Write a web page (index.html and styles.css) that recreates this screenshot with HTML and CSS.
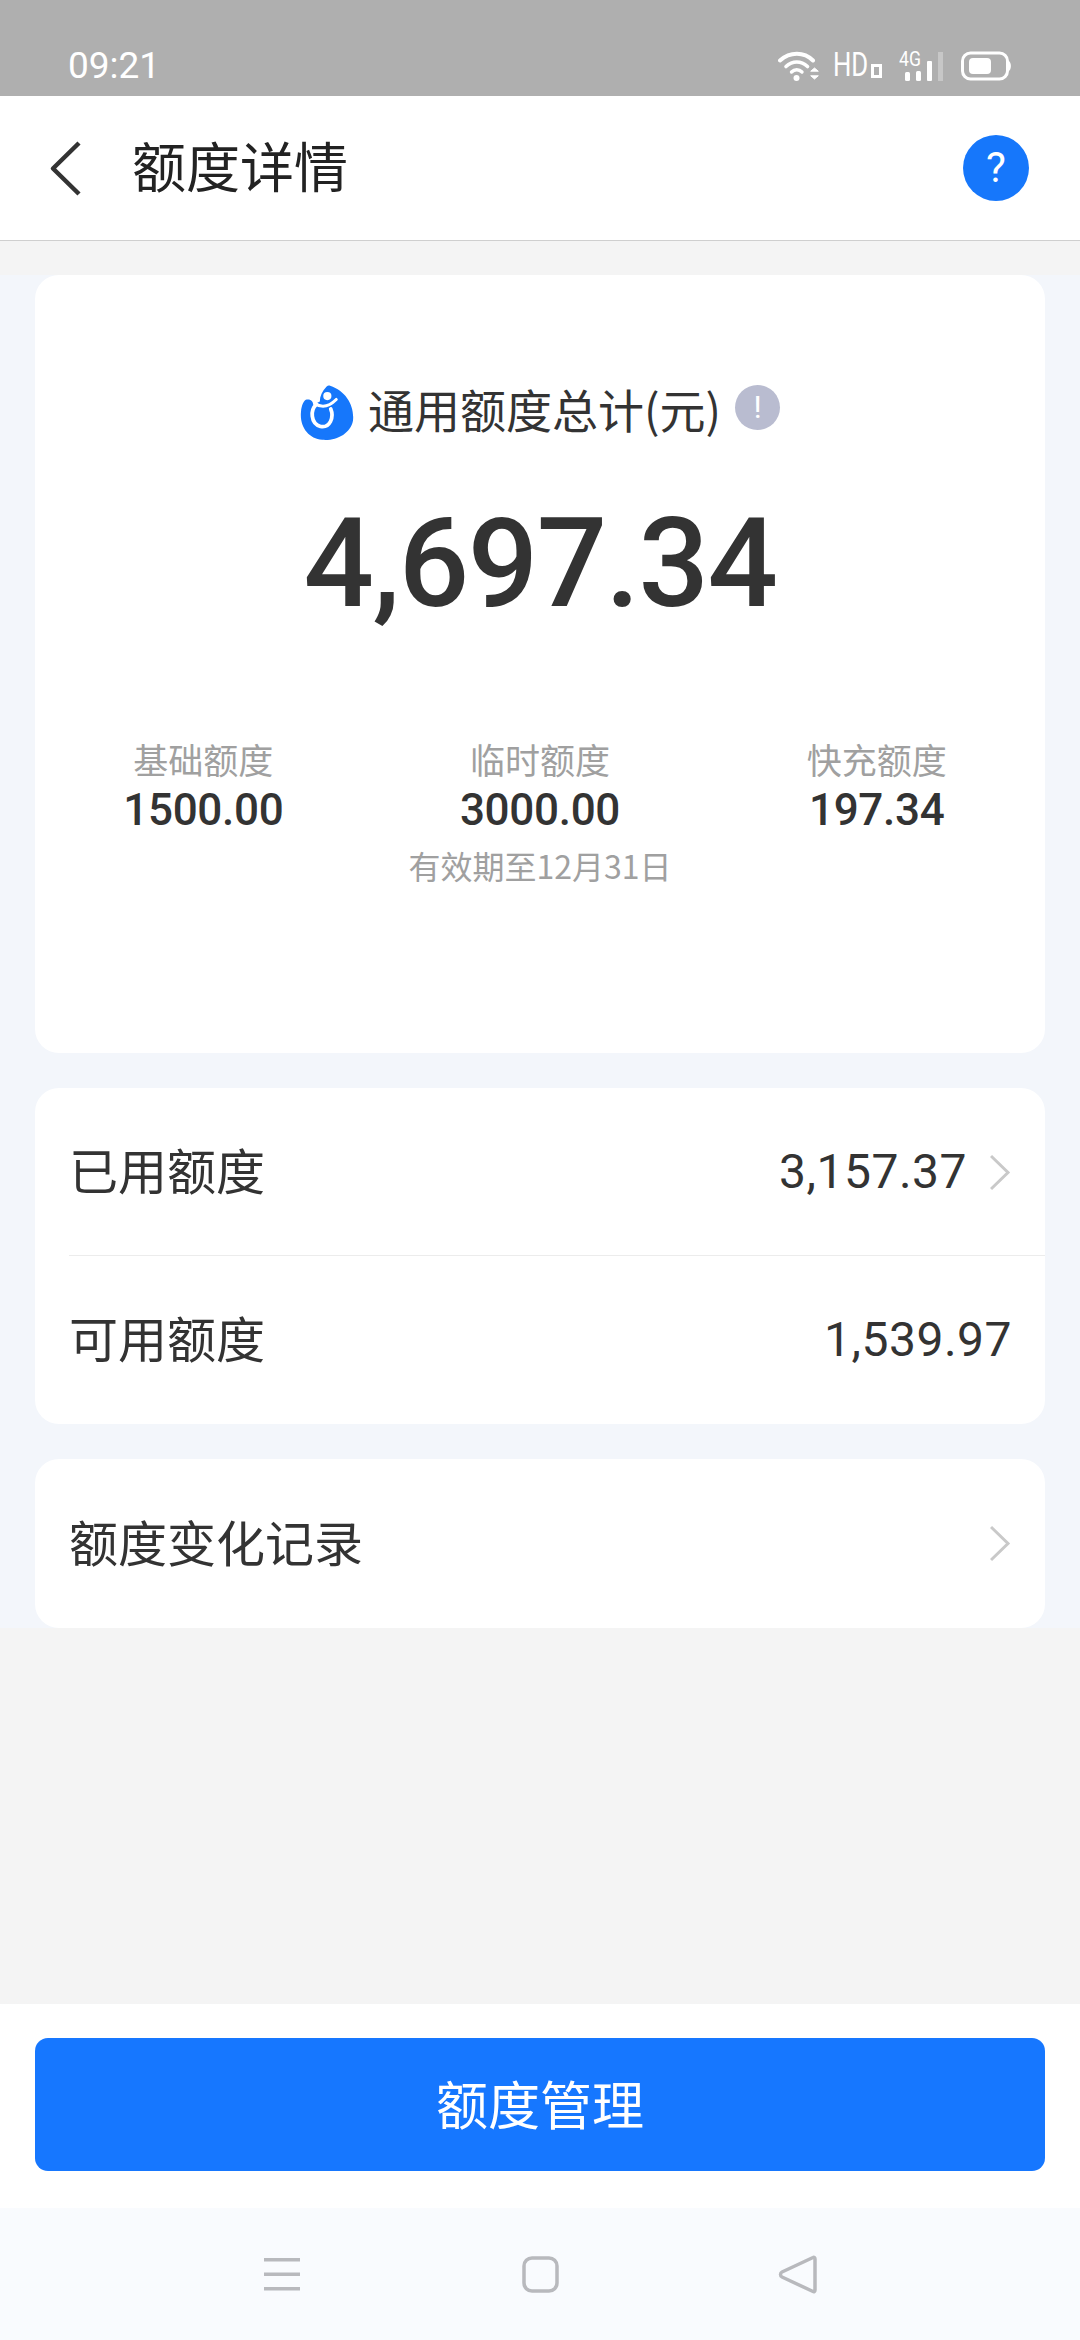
FILE: index.html
```html
<!DOCTYPE html>
<html lang="zh-CN">
<head>
<meta charset="utf-8">
<title>额度详情</title>
<link rel="stylesheet" href="styles.css">
</head>
<body>
<div class="app">
  <div class="status">
    <span class="time">09:21</span>
    <div class="status-icons">
      <svg class="ic-wifi" width="41" height="31" viewBox="0 0 41 31" fill="none" stroke="#fff" stroke-linecap="round">
        <path d="M2 9.500C12 0.500 26 0.500 35 9.500" stroke-width="4"/>
        <path d="M8 15.500C14.500 9.500 23 9.500 29.500 15.500" stroke-width="3.600"/>
        <path d="M13.500 21C16.500 18 21 18 24 21" stroke-width="3.400"/>
        <circle cx="18.500" cy="27" r="3" fill="#fff" stroke="none"/>
        <path d="M33 20l3.500-3 3.500 3zM33 25l3.500 3 3.500-3z" fill="#fff" stroke="#fff" stroke-width="1"/>
      </svg>
      <div class="hd">
        <span class="hd-text">HD</span>
        <span class="hd-box"></span>
      </div>
      <div class="signal">
        <span class="g-text">4G</span>
        <svg width="45" height="31" viewBox="0 0 45 31">
          <rect x="6" y="21" width="5" height="9" rx="1.500" fill="#fff"/>
          <rect x="17" y="20" width="5" height="10" rx="1.500" fill="#fff"/>
          <rect x="28" y="10" width="5" height="20" rx="1" fill="#fff"/>
          <rect x="39" y="1" width="5" height="29" fill="#fff" fill-opacity=".3"/>
        </svg>
      </div>
      <svg class="ic-batt" width="51" height="30" viewBox="0 0 51 30">
        <rect x="1.500" y="2" width="45" height="26" rx="8" fill="none" stroke="#fff" stroke-width="3"/>
        <rect x="8" y="7" width="22" height="16" rx="4" fill="#fff"/>
        <path d="M48 10c2.500 2 2.500 8 0 10z" fill="#fff"/>
      </svg>
    </div>
  </div>

  <header class="topbar">
    <svg class="back" width="32" height="55" viewBox="0 0 32 55" fill="none" stroke="#333" stroke-width="4.500" stroke-linejoin="round">
      <path d="M30 2L4 27.500 30 53" />
    </svg>
    <h1 class="title">额度详情</h1>
    <span class="help">?</span>
  </header>

  <main class="main">
    <div class="stack">
      <section class="card summary">
        <div class="sum-head">
          <svg class="logo" width="54" height="56" viewBox="30 28 158 163">
            <path d="M118 30C165 45 190 90 185 132C178 170 135 192 95 188C55 185 28 150 33 105C34 88 42 70 50 70C60 68 70 76 68 86L88 76C88 60 95 45 108 32C112 28 116 29 118 30Z" fill="#1677fb"/>
            <path d="M78 84C60 100 60 140 90 149C118 154 130 122 120 98" fill="none" stroke="#fff" stroke-width="11" stroke-linecap="round"/>
            <path d="M74 82C92 94 114 92 136 70" fill="none" stroke="#fff" stroke-width="9" stroke-linecap="round"/>
            <circle cx="110" cy="60" r="12" fill="#fff"/>
          </svg>
          <span class="sum-title">通用额度总计(元)</span>
          <span class="warn">!</span>
        </div>
        <div class="total">4,697.34</div>
        <div class="cols">
          <div class="col">
            <div class="col-label">基础额度</div>
            <div class="col-value">1500.00</div>
          </div>
          <div class="col">
            <div class="col-label">临时额度</div>
            <div class="col-value">3000.00</div>
            <div class="col-note">有效期至12月31日</div>
          </div>
          <div class="col">
            <div class="col-label">快充额度</div>
            <div class="col-value">197.34</div>
          </div>
        </div>
      </section>

      <section class="card">
        <div class="row row-a">
          <span class="row-label">已用额度</span>
          <span class="row-value">3,157.37</span>
          <svg class="chev" width="22" height="37" viewBox="0 0 22 37" fill="none" stroke="#c9c9c9" stroke-width="3"><path d="M1 2L18 18.500 1 35"/></svg>
        </div>
        <div class="row row-b">
          <span class="row-label">可用额度</span>
          <span class="row-value">1,539.97</span>
        </div>
      </section>

      <section class="card">
        <div class="row row-c">
          <span class="row-label">额度变化记录</span>
          <svg class="chev" width="22" height="37" viewBox="0 0 22 37" fill="none" stroke="#c9c9c9" stroke-width="3"><path d="M1 2L18 18.500 1 35"/></svg>
        </div>
      </section>
    </div>
  </main>

  <div class="footer">
    <button class="btn">额度管理</button>
  </div>

  <nav class="nav">
    <svg width="36" height="34" viewBox="0 0 36 34" fill="#b8b9bd"><rect y="1" width="36" height="3.500"/><rect y="15.500" width="36" height="3.500"/><rect y="30" width="36" height="3.500"/></svg>
    <svg width="37" height="37" viewBox="0 0 37 37" fill="none" stroke="#b8b9bd" stroke-width="3.500"><rect x="2" y="2" width="33" height="33" rx="8"/></svg>
    <svg class="nav-back" width="39" height="41" viewBox="0 0 39 41" fill="none" stroke="#b8b9bd" stroke-width="3.500" stroke-linejoin="round"><path d="M35 3.500C36 3 37 3.500 37 5V36C37 37.500 36 38 35 37.500L4 23C2 22 2 19 4 18Z"/></svg>
  </nav>
</div>
</body>
</html>
```
FILE: styles.css
```css
* { box-sizing: border-box; }
html, body { margin: 0; padding: 0; }
body {
  width: 1080px;
  height: 2340px;
  font-family: "Noto Sans CJK SC", Roboto, sans-serif;
  color: #333;
  background: #f4f4f4;
}
.app { display: flex; flex-direction: column; height: 2340px; }

.status {
  height: 96px;
  flex: none;
  background: #afafaf;
  color: #fff;
  display: flex;
  justify-content: space-between;
  align-items: flex-start;
  padding: 45px 68px 0 68px;
}
.time { font-family: Roboto, sans-serif; font-size: 37px; line-height: 42px; }
.status-icons { display: flex; align-items: flex-start; padding-top: 6px; }
.status-icons svg { display: block; }
.ic-wifi { margin-right: 14px; }
.hd { display: flex; align-items: flex-end; width: 49px; height: 28px; margin-right: 17px; }
.hd-text {
  flex: none;
  display: block;
  width: 36px;
  font-family: Roboto, sans-serif;
  font-size: 33px;
  line-height: 28px;
  transform: scaleX(.78);
  transform-origin: left center;
  white-space: nowrap;
}
.hd-box { flex: none; width: 11px; height: 14px; margin: 0 0 1px 2px; border: 3px solid #fff; }
.signal { position: relative; width: 45px; height: 31px; margin-right: 17px; }
.g-text {
  position: absolute;
  left: 0;
  top: -2px;
  font-family: Roboto, sans-serif;
  font-size: 20px;
  line-height: 20px;
  white-space: nowrap;
  transform: scaleX(.88);
  transform-origin: left center;
}

.topbar {
  height: 145px;
  flex: none;
  background: #fff;
  border-bottom: 1px solid #cfcfcf;
  display: flex;
  align-items: center;
  padding: 0 51px 0 49px;
}
.title {
  margin: 0 0 6px 51px;
  flex: 1;
  font-size: 54px;
  font-weight: 400;
  line-height: 72px;
  color: #222;
}
.help {
  width: 66px;
  height: 66px;
  border-radius: 50%;
  background: #1677fb;
  color: #fff;
  font-family: Roboto, sans-serif;
  font-weight: 400;
  font-size: 42px;
  line-height: 66px;
  text-align: center;
}

.main { flex: 1; padding-top: 34px; background: #f4f4f4; }
.stack {
  display: flex;
  flex-direction: column;
  gap: 35px;
  padding: 0 35px;
  background: #f3f6fb;
}
.card { background: #fff; border-radius: 24px; overflow: hidden; }

.summary { padding: 110px 0 168px; }
.sum-head { display: flex; justify-content: center; align-items: flex-start; height: 55px; }
.logo { flex: none; display: block; margin-right: 14px; }
.sum-title { font-size: 46px; line-height: 46px; color: #333; }
.warn {
  width: 45px;
  height: 45px;
  border-radius: 50%;
  background: #b9bcd0;
  color: #fff;
  font-family: Roboto, sans-serif;
  font-size: 32px;
  line-height: 45px;
  text-align: center;
  margin-left: 14px;
}
.total {
  margin-top: 61px;
  font-family: Roboto, sans-serif;
  font-weight: 500;
  font-size: 124px;
  line-height: 126px;
  letter-spacing: -1.500px;
  text-align: center;
  color: #333;
}
.cols { display: grid; grid-template-columns: repeat(3, 1fr); margin-top: 112px; text-align: center; }
.col-label { font-size: 35px; line-height: 40px; color: #a0a0a0; }
.col-value {
  margin-top: 7px;
  font-family: Roboto, sans-serif;
  font-weight: 500;
  font-size: 44px;
  line-height: 48px;
  letter-spacing: -0.300px;
  color: #333;
}
.col-note { margin-top: 11px; font-size: 32px; line-height: 40px; color: #a0a0a0; }

.row { display: flex; align-items: center; padding: 0 33px 0 34px; }
.row-a { height: 168px; position: relative; }
.row-a::after {
  content: "";
  position: absolute;
  left: 34px;
  right: 0;
  bottom: 0;
  height: 1px;
  background: #ececec;
}
.row-b { height: 168px; }
.row-c { height: 169px; }
.row-label { flex: 1; font-size: 49px; line-height: 60px; padding-bottom: 6px; color: #333; }
.row-value { font-family: Roboto, sans-serif; font-size: 48px; line-height: 60px; letter-spacing: 0.500px; color: #333; }
.chev { flex: none; display: block; margin-left: 23px; }

.footer { height: 204px; flex: none; background: #fff; padding: 34px 35px 0 35px; }
.btn {
  display: block;
  width: 1010px;
  height: 133px;
  border: 0;
  border-radius: 13px;
  background: #1677ff;
  color: #fff;
  font-family: "Noto Sans CJK SC", sans-serif;
  font-size: 52px;
  padding: 0 0 4px;
}

.nav {
  height: 132px;
  flex: none;
  background: #f9fbfe;
  display: flex;
  align-items: center;
  justify-content: center;
  gap: 222px;
}
.nav svg { display: block; }
.nav-back { margin-left: -3px; }
```
